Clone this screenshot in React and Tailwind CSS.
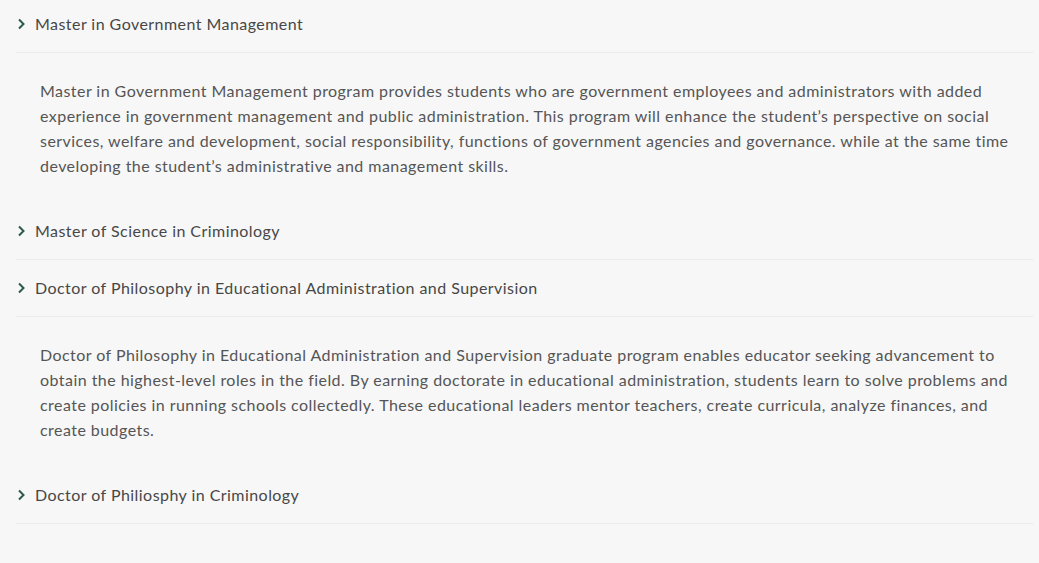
import React from 'react'

const items = [
  {
    title: 'Master in Government Management',
    body: "Master in Government Management program provides students who are government employees and administrators with added experience in government management and public administration. This program will enhance the student’s perspective on social services, welfare and development, social responsibility, functions of government agencies and governance. while at the same time developing the student’s administrative and management skills.",
  },
  { title: 'Master of Science in Criminology' },
  {
    title: 'Doctor of Philosophy in Educational Administration and Supervision',
    body: 'Doctor of Philosophy in Educational Administration and Supervision graduate program enables educator seeking advancement to obtain the highest-level roles in the field. By earning doctorate in educational administration, students learn to solve problems and create policies in running schools collectedly. These educational leaders mentor teachers, create curricula, analyze finances, and create budgets.',
  },
  { title: 'Doctor of Philiosphy in Criminology' },
]

function Chevron(){
  return (
    <svg width="9" height="12" viewBox="0 0 9 12" className="shrink-0">
      <path d="M2 1.5 L6.5 6 L2 10.5" fill="none" stroke="#2b5a46" strokeWidth="2" />
    </svg>
  )
}

export default function App(){
  return (
    <div className="flex flex-col min-h-screen bg-[#f7f7f7] text-[#4a4a4a] tracking-[0.45px]" style={{ fontFamily: 'Lato, "Open Sans", sans-serif' }}>
      <div className="ml-4 mr-[6px] -mt-1">
        {items.map((it, i) => (
          <div key={i}>
            <div className="flex items-center gap-[9px] h-[57px] border-b border-[#ebebeb] pl-[1px]">
              <Chevron />
              <span className="text-[16px] text-[#474747]">{it.title}</span>
            </div>
            {it.body && (
              <div className="pl-6 pr-6 pt-[25px] pb-[25px] text-[16px] leading-[25px] text-[#555]">
                {it.body}
              </div>
            )}
          </div>
        ))}
      </div>
    </div>
  )
}
